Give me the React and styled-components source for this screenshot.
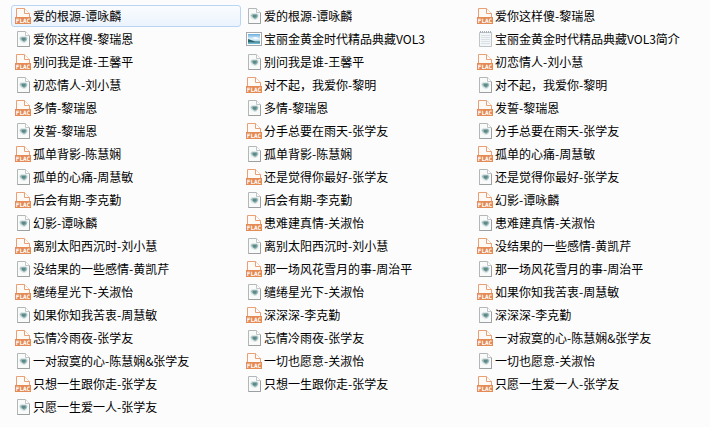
import styled, { createGlobalStyle } from "styled-components";

const FILES = [
  ["flac", "爱的根源-谭咏麟"],
  ["lrc", "爱的根源-谭咏麟"],
  ["flac", "爱你这样傻-黎瑞恩"],
  ["lrc", "爱你这样傻-黎瑞恩"],
  ["image", "宝丽金黄金时代精品典藏VOL3"],
  ["text", "宝丽金黄金时代精品典藏VOL3简介"],
  ["flac", "别问我是谁-王馨平"],
  ["lrc", "别问我是谁-王馨平"],
  ["flac", "初恋情人-刘小慧"],
  ["lrc", "初恋情人-刘小慧"],
  ["flac", "对不起，我爱你-黎明"],
  ["lrc", "对不起，我爱你-黎明"],
  ["flac", "多情-黎瑞恩"],
  ["lrc", "多情-黎瑞恩"],
  ["flac", "发誓-黎瑞恩"],
  ["lrc", "发誓-黎瑞恩"],
  ["flac", "分手总要在雨天-张学友"],
  ["lrc", "分手总要在雨天-张学友"],
  ["flac", "孤单背影-陈慧娴"],
  ["lrc", "孤单背影-陈慧娴"],
  ["flac", "孤单的心痛-周慧敏"],
  ["lrc", "孤单的心痛-周慧敏"],
  ["flac", "还是觉得你最好-张学友"],
  ["lrc", "还是觉得你最好-张学友"],
  ["flac", "后会有期-李克勤"],
  ["lrc", "后会有期-李克勤"],
  ["flac", "幻影-谭咏麟"],
  ["lrc", "幻影-谭咏麟"],
  ["flac", "患难建真情-关淑怡"],
  ["lrc", "患难建真情-关淑怡"],
  ["flac", "离别太阳西沉时-刘小慧"],
  ["lrc", "离别太阳西沉时-刘小慧"],
  ["flac", "没结果的一些感情-黄凯芹"],
  ["lrc", "没结果的一些感情-黄凯芹"],
  ["flac", "那一场风花雪月的事-周治平"],
  ["lrc", "那一场风花雪月的事-周治平"],
  ["flac", "缱绻星光下-关淑怡"],
  ["lrc", "缱绻星光下-关淑怡"],
  ["flac", "如果你知我苦衷-周慧敏"],
  ["lrc", "如果你知我苦衷-周慧敏"],
  ["flac", "深深深-李克勤"],
  ["lrc", "深深深-李克勤"],
  ["flac", "忘情冷雨夜-张学友"],
  ["lrc", "忘情冷雨夜-张学友"],
  ["flac", "一对寂寞的心-陈慧娴&张学友"],
  ["lrc", "一对寂寞的心-陈慧娴&张学友"],
  ["flac", "一切也愿意-关淑怡"],
  ["lrc", "一切也愿意-关淑怡"],
  ["flac", "只想一生跟你走-张学友"],
  ["lrc", "只想一生跟你走-张学友"],
  ["flac", "只愿一生爱一人-张学友"],
  ["lrc", "只愿一生爱一人-张学友"],
];

const GlobalStyle = createGlobalStyle`
  body {
    margin: 0;
    background: #fcfcfc;
    color: #000;
    font-family: "Noto Sans CJK SC", "Noto Sans", sans-serif;
    font-size: 12px;
    line-height: 20px;
  }
`;

const FileList = styled.ul`
  display: grid;
  grid-template-columns: repeat(3, minmax(0, 1fr));
  gap: 1px;
  margin: 0;
  padding: 5px 7px 8px 11px;
  list-style: none;
`;

const FileItem = styled.li`
  display: flex;
  align-items: center;
  gap: 1px;
  padding: 0 3px;
  border: 1px solid ${({ $selected }) => ($selected ? "#b8d6f3" : "transparent")};
  border-radius: 3px;
  background: ${({ $selected }) =>
    $selected ? "linear-gradient(#fafcfe, #ebf3fd)" : "none"};
  white-space: nowrap;
  cursor: default;
`;

const Icon = styled.svg`
  flex: none;
  width: 17px;
  height: 18px;
`;

const FileName = styled.span`
  overflow: hidden;
  text-overflow: ellipsis;
`;

function FlacIcon() {
  return (
    <Icon viewBox="0 0 17 18" aria-hidden="true">
      <path d="M1.5 11V1.5H9.5L14.5 6.5V11" fill="#fffaf6" stroke="#e8a077" />
      <path d="M9.5 1.5V6.5H14.5" fill="#fff" stroke="#e8a077" />
      <rect x="0" y="10" width="16" height="7" fill="#e48a55" />
      <text
        x="8"
        y="16"
        fill="#fff"
        fontFamily="DejaVu Sans Mono, monospace"
        fontSize="6"
        fontWeight="bold"
        textAnchor="middle"
      >
        FLAC
      </text>
    </Icon>
  );
}

function LyricIcon() {
  return (
    <Icon viewBox="0 0 17 18" aria-hidden="true">
      <path d="M2.5 1.5H10.5L14.5 5.5V16.5H2.5Z" fill="#f9fafa" stroke="#b4b7b8" />
      <path d="M2.5 16.5H14.5V6" fill="none" stroke="#9da0a1" />
      <path d="M10.5 1.5V5.5H14.5" fill="#fff" stroke="#c2c5c6" />
      <path d="M4 8L6 6H11L13 8L12 11L10 13H8L5 11Z" fill="#dce6e6" />
      <path d="M5 8L7 7H11L12 9L11 11L9 12L6 10Z" fill="#8fb0ae" />
      <path d="M7 8L10 8L11 9L9 11L7 10Z" fill="#5c8a88" />
    </Icon>
  );
}

function ImageIcon() {
  return (
    <Icon viewBox="0 0 17 18" aria-hidden="true">
      <defs>
        <linearGradient id="sky" x1="0" y1="0" x2="0" y2="1">
          <stop offset="0" stopColor="#6aaedb" />
          <stop offset="0.5" stopColor="#e2f3fb" />
          <stop offset="1" stopColor="#5fb2ca" />
        </linearGradient>
      </defs>
      <rect x="0.5" y="2.5" width="15" height="13" fill="#fff" stroke="#a5a9ad" />
      <rect x="2" y="4" width="12" height="10" fill="url(#sky)" />
      <path d="M2 9L5 10L9 11.5L14 11.5V12.5H2Z" fill="#2c6570" />
      <path d="M6 8L9 7L13 8L10 9Z" fill="#fff" />
    </Icon>
  );
}

function TextIcon() {
  return (
    <Icon viewBox="0 0 17 18" aria-hidden="true">
      <path d="M2.5 2.5H14.5V16.5H2.5Z" fill="#f3f6f8" stroke="#bfc4c7" />
      <path
        d="M4 5.5H13M4 7.5H13M4 9.5H13M4 11.5H13M4 13.5H13"
        stroke="#dae0e4"
      />
      <path d="M3 2H15" stroke="#a9b0b5" strokeWidth="2" strokeDasharray="1 1" />
    </Icon>
  );
}

const ICONS = {
  flac: FlacIcon,
  lrc: LyricIcon,
  image: ImageIcon,
  text: TextIcon,
};

function App() {
  return (
    <>
      <GlobalStyle />
      <FileList>
        {FILES.map(([type, name], index) => {
          const TypeIcon = ICONS[type];
          return (
            <FileItem key={`${type}-${name}`} $selected={index === 0}>
              <TypeIcon />
              <FileName>{name}</FileName>
            </FileItem>
          );
        })}
      </FileList>
    </>
  );
}

export default App;
